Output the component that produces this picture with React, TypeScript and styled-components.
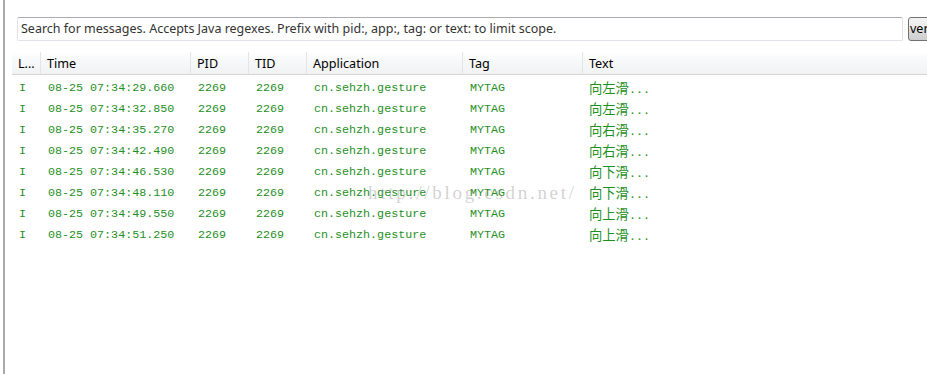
import React from "react"
import styled, { createGlobalStyle } from "styled-components"

type LogRow = {
	level: string
	time: string
	pid: string
	tid: string
	app: string
	tag: string
	text: string
}

const rows: LogRow[] = [
	{ level: "I", time: "08-25 07:34:29.660", pid: "2269", tid: "2269", app: "cn.sehzh.gesture", tag: "MYTAG", text: "向左滑" },
	{ level: "I", time: "08-25 07:34:32.850", pid: "2269", tid: "2269", app: "cn.sehzh.gesture", tag: "MYTAG", text: "向左滑" },
	{ level: "I", time: "08-25 07:34:35.270", pid: "2269", tid: "2269", app: "cn.sehzh.gesture", tag: "MYTAG", text: "向右滑" },
	{ level: "I", time: "08-25 07:34:42.490", pid: "2269", tid: "2269", app: "cn.sehzh.gesture", tag: "MYTAG", text: "向右滑" },
	{ level: "I", time: "08-25 07:34:46.530", pid: "2269", tid: "2269", app: "cn.sehzh.gesture", tag: "MYTAG", text: "向下滑" },
	{ level: "I", time: "08-25 07:34:48.110", pid: "2269", tid: "2269", app: "cn.sehzh.gesture", tag: "MYTAG", text: "向下滑" },
	{ level: "I", time: "08-25 07:34:49.550", pid: "2269", tid: "2269", app: "cn.sehzh.gesture", tag: "MYTAG", text: "向上滑" },
	{ level: "I", time: "08-25 07:34:51.250", pid: "2269", tid: "2269", app: "cn.sehzh.gesture", tag: "MYTAG", text: "向上滑" },
]

const columns = "29px 150px 58px 58px 156px 120px 1fr"

const App = () => {
	return (
		<>
			<GlobalStyle />
			<Window>
				<Panel>
					<SearchBar>
						<SearchInput readOnly value="Search for messages. Accepts Java regexes. Prefix with pid:, app:, tag: or text: to limit scope." />
						<VerboseButton>verbose</VerboseButton>
					</SearchBar>
					<Table>
						<HeaderRow>
							<HeaderCell>L...</HeaderCell>
							<HeaderCell>Time</HeaderCell>
							<HeaderCell>PID</HeaderCell>
							<HeaderCell>TID</HeaderCell>
							<HeaderCell>Application</HeaderCell>
							<HeaderCell>Tag</HeaderCell>
							<HeaderCell last>Text</HeaderCell>
						</HeaderRow>
						<Body>
							{rows.map((row, i) => (
								<Row key={i}>
									<Cell>{row.level}</Cell>
									<Cell>{row.time}</Cell>
									<Cell>{row.pid}</Cell>
									<Cell>{row.tid}</Cell>
									<Cell>{row.app}</Cell>
									<Cell>{row.tag}</Cell>
									<Cell cjk>
										<Han>{row.text}</Han>...
									</Cell>
								</Row>
							))}
						</Body>
						<Watermark>http://blog.csdn.net/</Watermark>
					</Table>
				</Panel>
			</Window>
		</>
	)
}

const GlobalStyle = createGlobalStyle`
	html, body {
		margin: 0;
		padding: 0;
		background: #ffffff;
		overflow: hidden;
	}
	* {
		box-sizing: border-box;
	}
`

const Window = styled.div`
	width: 927px;
	height: 374px;
	display: flex;
	overflow: hidden;
	background: #ffffff;
	padding-left: 3px;
`

const Panel = styled.div`
	flex: 1;
	border-left: 2px solid #a9a9a9;
	padding: 17px 0 0 7px;
	display: flex;
	flex-direction: column;
	min-width: 0;
`

const SearchBar = styled.div`
	display: flex;
	align-items: center;
	gap: 5px;
	height: 24px;
	padding-left: 5px;
	white-space: nowrap;
`

const SearchInput = styled.input`
	width: 886px;
	flex: none;
	height: 24px;
	border: 1px solid #e2e3ea;
	border-top-color: #abadb3;
	border-radius: 2px;
	padding: 0 3px 1px;
	font-family: "Noto Sans", "Noto Sans CJK SC", sans-serif;
	font-size: 12.5px;
	color: #333333;
	outline: none;
	background: #ffffff;
`

const VerboseButton = styled.button`
	flex: none;
	height: 24px;
	padding: 0 2px 1px 1px;
	border: 1px solid #707070;
	border-radius: 3px;
	background: linear-gradient(#f2f2f2 0%, #ebebeb 50%, #dddddd 51%, #cfcfcf 100%);
	font-family: "Noto Sans", sans-serif;
	font-size: 12.5px;
	color: #000000;
`

const Table = styled.div`
	position: relative;
	margin-top: 11px;
	display: flex;
	flex-direction: column;
`

const HeaderRow = styled.div`
	display: grid;
	grid-template-columns: ${columns};
	height: 23px;
	background: linear-gradient(#ffffff 0%, #f7f8f9 40%, #f1f2f4 100%);
	border-bottom: 1px solid #d5d5d5;
`

const HeaderCell = styled.div<{ last?: boolean }>`
	display: flex;
	align-items: center;
	padding-left: 6px;
	border-right: ${({ last }) => (last ? "none" : "1px solid #e3e4e6")};
	font-family: "Noto Sans", "Noto Sans CJK SC", sans-serif;
	font-size: 12.6px;
	color: #000000;
	white-space: nowrap;
	overflow: hidden;
`

const Body = styled.div`
	display: flex;
	flex-direction: column;
	padding-top: 2px;
`

const Row = styled.div`
	display: grid;
	grid-template-columns: ${columns};
	height: 21px;
	align-items: center;
`

const Cell = styled.div<{ cjk?: boolean }>`
	padding-left: ${({ cjk }) => (cjk ? "6px" : "7px")};
	font-family: "Liberation Mono", monospace;
	font-size: 11.7px;
	color: #1f8f1f;
	white-space: nowrap;
	overflow: hidden;
`

const Han = styled.span`
	font-family: "Noto Sans CJK SC", sans-serif;
	font-size: 13.3px;
`

const Watermark = styled.div`
	position: absolute;
	left: 356px;
	top: 130px;
	font-family: "Liberation Serif", serif;
	font-size: 19px;
	letter-spacing: 2.7px;
	color: rgba(140, 140, 140, 0.4);
	pointer-events: none;
`

export default App
